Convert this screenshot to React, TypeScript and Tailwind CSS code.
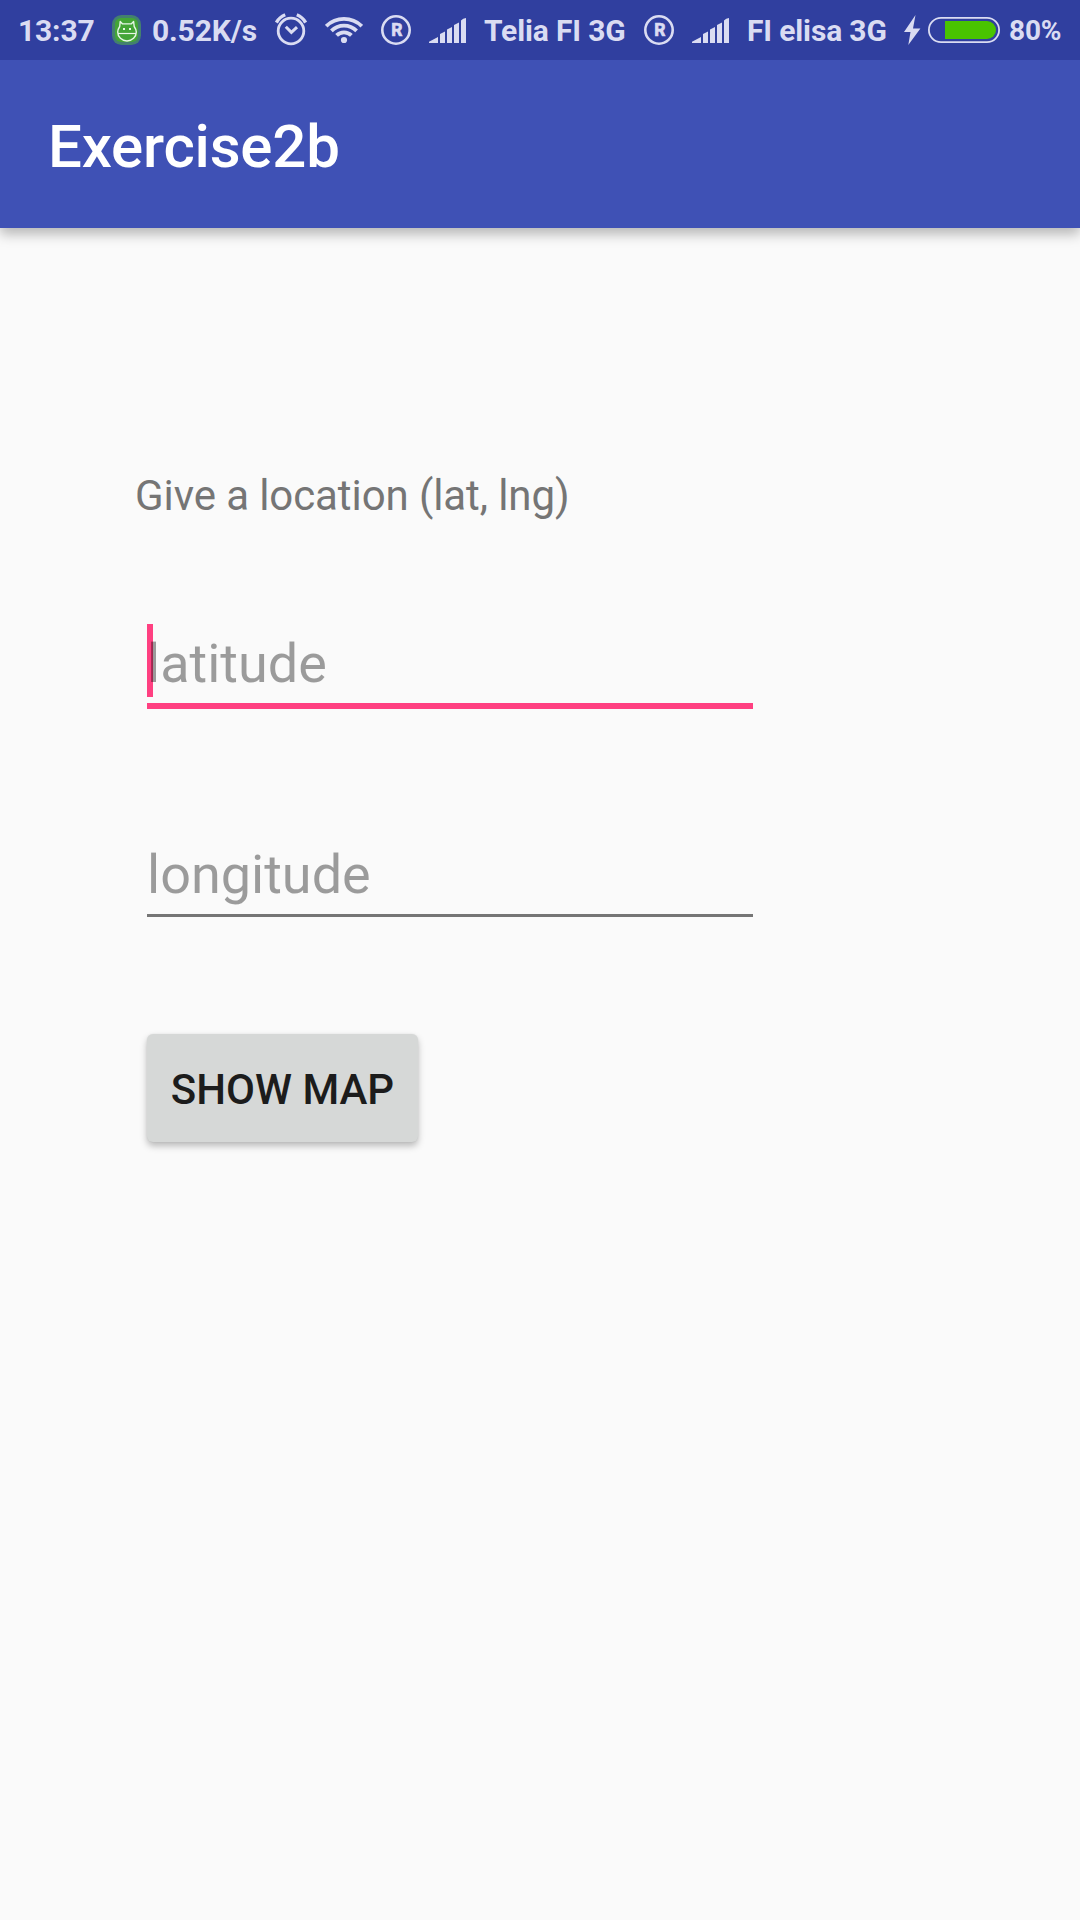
const INK = '#dadcf2';

function AppBadge() {
  return (
    <svg className="ml-[3px] w-[29px] shrink-0" height="60" viewBox="112 0 29 60" fill="none">
      <rect x="112" y="15" width="29" height="30" rx="9.5" fill="#43806f" />
      <rect x="115" y="18" width="23" height="24" rx="6" fill="#43a536" />
      <path
        d="M120.2 21.5L122.6 23.9H131.2L133.6 21.5L134.2 26.5Q136.3 29.5 136.3 32A9.3 9 0 0 1 117.7 32Q117.7 29.5 119.7 26.5Z"
        stroke="#e6f6e6"
        strokeWidth="1.4"
        strokeLinejoin="round"
      />
      <path d="M118 33.5H136" stroke="#e6f6e6" strokeWidth="1.2" />
      <rect x="123" y="28" width="2" height="2" fill="#e6f6e6" />
      <rect x="129" y="28" width="2" height="2" fill="#e6f6e6" />
    </svg>
  );
}

function AlarmIcon() {
  return (
    <svg className="ml-[17px] w-8 shrink-0" height="60" viewBox="275 0 32 60" fill="none" stroke={INK}>
      <circle cx="291" cy="31" r="12.8" strokeWidth="2.8" />
      <path d="M276.4 22.6Q279.3 17.2 285.2 14.8M305.6 22.6Q302.7 17.2 296.8 14.8" strokeWidth="3.4" />
      <path d="M285.8 26.8L291.4 32.4L297 27.2" strokeWidth="3" />
    </svg>
  );
}

function WifiIcon() {
  return (
    <svg className="ml-[18px] w-[38px] shrink-0" height="60" viewBox="325 0 38 60" fill="none" stroke={INK}>
      <path d="M326.2 26.2A25.4 25.4 0 0 1 361.8 26.2" strokeWidth="3.8" />
      <path d="M331.4 30.8A17.8 17.8 0 0 1 356.6 30.8" strokeWidth="3.8" />
      <path d="M336.6 35.4A10.4 10.4 0 0 1 351.4 35.4" strokeWidth="3.8" />
      <circle cx="344" cy="40" r="3.1" fill={INK} stroke="none" />
    </svg>
  );
}

function RoamingIcon() {
  return (
    <svg className="ml-[18px] w-[30px] shrink-0" height="60" viewBox="0 0 30 60">
      <circle cx="15" cy="30" r="13.7" fill="none" stroke={INK} strokeWidth="2.6" />
      <text
        x="15.7"
        y="35.7"
        textAnchor="middle"
        fill={INK}
        stroke={INK}
        strokeWidth="0.7"
        fontSize="17.5"
        fontWeight="700"
        fontFamily="Roboto, sans-serif"
      >
        R
      </text>
    </svg>
  );
}

function SignalIcon() {
  return (
    <svg className="ml-[18px] w-[37px] shrink-0" height="60" viewBox="0 0 37 60" fill={INK}>
      <path d="M0 43V41.7L9 37V43ZM11 43V34L16 31.5V43ZM18 43V29.5L23 27V43ZM25 43V25L30 22.5V43ZM32 43V20.5Q34 18 37 18V43Z" />
    </svg>
  );
}

function Battery() {
  return (
    <svg className="ml-[18px] w-24 shrink-0" height="60" viewBox="904 0 96 60" fill="none">
      <path d="M915.5 15L904 32H910.5L908.3 45L920.4 28.5H913Z" fill={INK} />
      <rect x="928.9" y="17.9" width="70.2" height="24.2" rx="12.1" stroke={INK} strokeWidth="1.8" />
      <path d="M945 21H987A9 9 0 0 1 987 39H945Z" fill="#49c400" />
    </svg>
  );
}

function StatusBar() {
  return (
    <div className="relative z-10 flex h-[60px] items-center bg-[#303f9f] pl-[18px] text-[30px] leading-[60px] font-bold tracking-[-0.15px] whitespace-nowrap text-[#dadcf2]">
      <span className="h-[60px] w-[91px] shrink-0 pt-px">13:37</span>
      <AppBadge />
      <span className="ml-[11px] h-[60px] w-[106px] shrink-0 pt-px">0.52K/s</span>
      <AlarmIcon />
      <WifiIcon />
      <RoamingIcon />
      <SignalIcon />
      <span className="ml-[18px] h-[60px] w-[142px] shrink-0 pt-px">Telia FI 3G</span>
      <RoamingIcon />
      <SignalIcon />
      <span className="ml-[18px] h-[60px] w-[139px] shrink-0 pt-px">FI elisa 3G</span>
      <Battery />
      <span className="ml-[9px] h-[60px] shrink-0 pt-px text-[28px]">80%</span>
    </div>
  );
}

export default function App() {
  return (
    <div className="h-[1920px] w-[1080px] overflow-hidden bg-[#fafafa] font-['Roboto',sans-serif]">
      <StatusBar />
      <header className="flex h-[168px] items-center bg-[#3f51b5] pt-[5px] pl-12 shadow-[0_6px_12px_rgba(0,0,0,0.28)]">
        <h1 className="text-[60px] leading-[70px] font-medium tracking-[-0.2px] text-white">Exercise2b</h1>
      </header>
      <main className="flex flex-col items-start pt-60 pl-[135px]">
        <p className="text-[42px] leading-[56px] tracking-[-0.09px] text-[#757575]">Give a location (lat, lng)</p>
        <div className="relative mt-[100px] ml-3 h-[85px] w-[606px] border-b-6 border-[#ff4081]">
          <div className="absolute top-0 left-0 h-[73px] w-[6px] bg-[#ff4081]" />
          <input
            aria-label="latitude"
            placeholder="latitude"
            className="relative mt-[5px] block h-[68px] w-full bg-transparent text-[54px] outline-none placeholder:text-black/38"
          />
        </div>
        <div className="mt-[126px] ml-3 h-[82px] w-[606px] border-b-3 border-[#757575]">
          <input
            aria-label="longitude"
            placeholder="longitude"
            className="mt-[5px] block h-[68px] w-full bg-transparent text-[54px] outline-none placeholder:text-black/38"
          />
        </div>
        <button className="mt-[117px] ml-3 h-[108px] w-[271px] rounded-[6px] bg-[#d6d8d7] pt-[3px] text-[42px] leading-[50px] font-medium whitespace-nowrap text-[#1c1c1c] shadow-[0_4px_7px_rgba(0,0,0,0.26),0_0_2px_rgba(0,0,0,0.08)]">
          SHOW MAP
        </button>
      </main>
    </div>
  );
}
